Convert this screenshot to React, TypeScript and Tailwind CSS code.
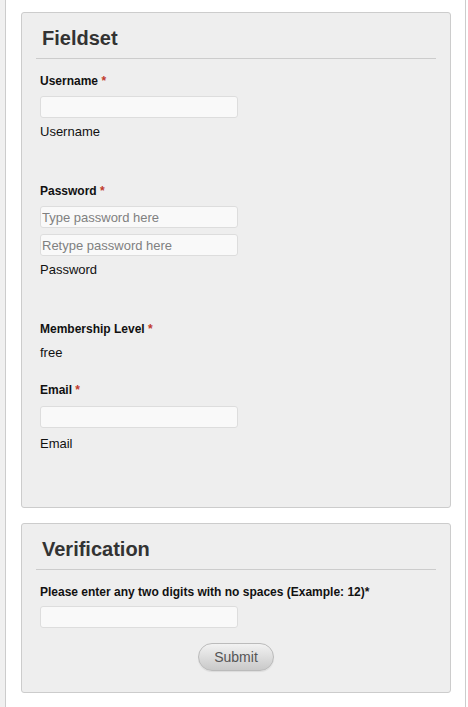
import React from 'react';

const Req: React.FC = () => <span className="text-[#c0392b]">*</span>;

const Field: React.FC<{ title: string; children: React.ReactNode; pb: string }> = ({ title, children, pb }) => (
  <div className={`border border-[#cccccc] rounded-[3px] bg-[#eeeeee] px-[14px] ${pb}`}>
    <div className="pt-[13px] pb-[8px] pl-[6px] border-b border-[#cccccc] text-[20px] leading-[24px] font-bold text-[#333333]">
      {title}
    </div>
    <div className="pl-[4px]">{children}</div>
  </div>
);

const inputCls =
  'block w-[198px] h-[22px] px-[1px] bg-[#f9f9f9] border border-[#dddddd] rounded-[3px] text-[13px] text-[#333] placeholder:text-[#808080] outline-none';

const labelCls = 'text-[12px] leading-[14px] font-bold text-[#111111]';
const descCls = 'text-[13px] leading-[16px] text-[#111111]';

export default function App() {
  return (
    <div className="flex min-h-screen bg-white" style={{ fontFamily: '"Liberation Sans", Arial, sans-serif' }}>
      <div className="w-[5px] bg-[#f0f0f0]" />
      <div className="w-[461px] border-x border-[#cccccc] bg-white pt-[12px] pl-[15px] pr-[14px] flex flex-col gap-[15px]">
        <Field title="Fieldset" pb="pb-[55px]">
          <div className={`${labelCls} mt-[15px]`}>
            Username <Req />
          </div>
          <input className={`${inputCls} mt-[8px]`} />
          <div className={`${descCls} mt-[6px]`}>Username</div>

          <div className={`${labelCls} mt-[44px]`}>
            Password <Req />
          </div>
          <input type="password" className={`${inputCls} mt-[8px]`} placeholder="Type password here" />
          <input type="password" className={`${inputCls} mt-[6px]`} placeholder="Retype password here" />
          <div className={`${descCls} mt-[6px]`}>Password</div>

          <div className={`${labelCls} mt-[44px]`}>
            Membership Level <Req />
          </div>
          <div className={`${descCls} mt-[9px]`}>free</div>

          <div className={`${labelCls} mt-[22px]`}>
            Email <Req />
          </div>
          <input className={`${inputCls} mt-[9px]`} />
          <div className={`${descCls} mt-[8px]`}>Email</div>
        </Field>

        <Field title="Verification" pb="pb-[21px]">
          <div className={`${labelCls} mt-[15px]`}>Please enter any two digits with no spaces (Example: 12)*</div>
          <input className={`${inputCls} mt-[7px]`} />
          <div className="flex justify-center mt-[15px] pr-[4px]">
            <button className="w-[76px] h-[28px] rounded-full border border-[#bbbbbb] bg-gradient-to-b from-[#f2f2f2] to-[#c9c9c9] text-[14px] text-[#555555] shadow-[0_1px_1px_rgba(0,0,0,0.08)]">
              Submit
            </button>
          </div>
        </Field>
      </div>
    </div>
  );
}
